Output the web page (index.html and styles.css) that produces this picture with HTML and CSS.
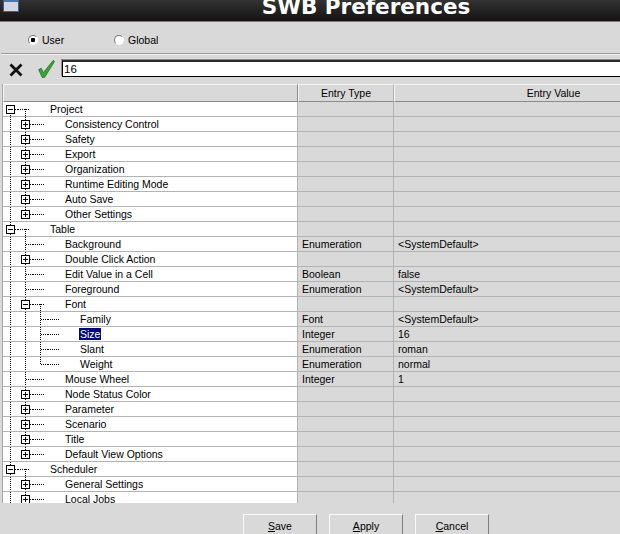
FILE: index.html
```html
<!DOCTYPE html>
<html>
<head>
    <meta charset="UTF-8">
    <title>SWB Preferences</title>
    <link rel="stylesheet" href="styles.css">
</head>
<body>
<div class="win">

    <div class="titlebar">
        <svg class="winicon" width="16" height="12" viewBox="0 0 16 12">
            <rect x="0.5" y="-1.5" width="15" height="13" fill="#d3d6dc" stroke="#3d5f96"/>
            <rect x="1" y="-1" width="14" height="3" fill="#4d74b4"/>
        </svg>
        <span class="title">SWB Preferences</span>
    </div>

    <div class="scope">
        <label class="opt"><span class="radio on"></span>User</label>
        <label class="opt"><span class="radio"></span>Global</label>
    </div>
    <div class="sep"></div>

    <div class="editbar">
        <svg class="btn-x" width="14" height="14" viewBox="0 0 14 14">
            <path d="M1.5 1.5 L12.5 12.5 M12.5 1.5 L1.5 12.5" stroke="#111" stroke-width="2.8"/>
        </svg>
        <svg class="btn-ok" width="17" height="18" viewBox="0 0 17 18">
            <polygon points="0.6,9.6 3.2,8.2 5.4,12.6 15.2,0.4 16.6,1.4 6.6,17.4 4.2,17.4" fill="#38a838" stroke="#1c661c" stroke-width="0.7"/>
        </svg>
        <div class="field">16</div>
    </div>

    <div class="table">
        <div class="hdr">
            <div class="h col-tree"></div>
            <div class="h col-type">Entry Type</div>
            <div class="h col-val">Entry Value</div>
        </div>
        <div class="rows">

            <div class="row"><div class="tree"><span class="n first"><i class="box"></i></span><span class="c open"></span><span class="lbl">Project</span></div><div class="col-type"></div><div class="col-val"></div></div>
            <div class="row"><div class="tree"><span class="g v"></span><span class="n"><i class="box plus"></i></span><span class="c"></span><span class="lbl">Consistency Control</span></div><div class="col-type"></div><div class="col-val"></div></div>
            <div class="row"><div class="tree"><span class="g v"></span><span class="n"><i class="box plus"></i></span><span class="c"></span><span class="lbl">Safety</span></div><div class="col-type"></div><div class="col-val"></div></div>
            <div class="row"><div class="tree"><span class="g v"></span><span class="n"><i class="box plus"></i></span><span class="c"></span><span class="lbl">Export</span></div><div class="col-type"></div><div class="col-val"></div></div>
            <div class="row"><div class="tree"><span class="g v"></span><span class="n"><i class="box plus"></i></span><span class="c"></span><span class="lbl">Organization</span></div><div class="col-type"></div><div class="col-val"></div></div>
            <div class="row"><div class="tree"><span class="g v"></span><span class="n"><i class="box plus"></i></span><span class="c"></span><span class="lbl">Runtime Editing Mode</span></div><div class="col-type"></div><div class="col-val"></div></div>
            <div class="row"><div class="tree"><span class="g v"></span><span class="n"><i class="box plus"></i></span><span class="c"></span><span class="lbl">Auto Save</span></div><div class="col-type"></div><div class="col-val"></div></div>
            <div class="row"><div class="tree"><span class="g v"></span><span class="n last"><i class="box plus"></i></span><span class="c"></span><span class="lbl">Other Settings</span></div><div class="col-type"></div><div class="col-val"></div></div>

            <div class="row"><div class="tree"><span class="n"><i class="box"></i></span><span class="c open"></span><span class="lbl">Table</span></div><div class="col-type"></div><div class="col-val"></div></div>
            <div class="row"><div class="tree"><span class="g v"></span><span class="n"></span><span class="c"></span><span class="lbl">Background</span></div><div class="col-type">Enumeration</div><div class="col-val">&lt;SystemDefault&gt;</div></div>
            <div class="row"><div class="tree"><span class="g v"></span><span class="n"><i class="box plus"></i></span><span class="c"></span><span class="lbl">Double Click Action</span></div><div class="col-type"></div><div class="col-val"></div></div>
            <div class="row"><div class="tree"><span class="g v"></span><span class="n"></span><span class="c"></span><span class="lbl">Edit Value in a Cell</span></div><div class="col-type">Boolean</div><div class="col-val">false</div></div>
            <div class="row"><div class="tree"><span class="g v"></span><span class="n"></span><span class="c"></span><span class="lbl">Foreground</span></div><div class="col-type">Enumeration</div><div class="col-val">&lt;SystemDefault&gt;</div></div>
            <div class="row"><div class="tree"><span class="g v"></span><span class="n"><i class="box"></i></span><span class="c open"></span><span class="lbl">Font</span></div><div class="col-type"></div><div class="col-val"></div></div>
            <div class="row"><div class="tree"><span class="g v"></span><span class="g v"></span><span class="n"></span><span class="c"></span><span class="lbl">Family</span></div><div class="col-type">Font</div><div class="col-val">&lt;SystemDefault&gt;</div></div>
            <div class="row"><div class="tree"><span class="g v"></span><span class="g v"></span><span class="n"></span><span class="c"></span><span class="lbl sel">Size</span></div><div class="col-type">Integer</div><div class="col-val">16</div></div>
            <div class="row"><div class="tree"><span class="g v"></span><span class="g v"></span><span class="n"></span><span class="c"></span><span class="lbl">Slant</span></div><div class="col-type">Enumeration</div><div class="col-val">roman</div></div>
            <div class="row"><div class="tree"><span class="g v"></span><span class="g v"></span><span class="n last"></span><span class="c"></span><span class="lbl">Weight</span></div><div class="col-type">Enumeration</div><div class="col-val">normal</div></div>
            <div class="row"><div class="tree"><span class="g v"></span><span class="n"></span><span class="c"></span><span class="lbl">Mouse Wheel</span></div><div class="col-type">Integer</div><div class="col-val">1</div></div>
            <div class="row"><div class="tree"><span class="g v"></span><span class="n"><i class="box plus"></i></span><span class="c"></span><span class="lbl">Node Status Color</span></div><div class="col-type"></div><div class="col-val"></div></div>
            <div class="row"><div class="tree"><span class="g v"></span><span class="n"><i class="box plus"></i></span><span class="c"></span><span class="lbl">Parameter</span></div><div class="col-type"></div><div class="col-val"></div></div>
            <div class="row"><div class="tree"><span class="g v"></span><span class="n"><i class="box plus"></i></span><span class="c"></span><span class="lbl">Scenario</span></div><div class="col-type"></div><div class="col-val"></div></div>
            <div class="row"><div class="tree"><span class="g v"></span><span class="n"><i class="box plus"></i></span><span class="c"></span><span class="lbl">Title</span></div><div class="col-type"></div><div class="col-val"></div></div>
            <div class="row"><div class="tree"><span class="g v"></span><span class="n last"><i class="box plus"></i></span><span class="c"></span><span class="lbl">Default View Options</span></div><div class="col-type"></div><div class="col-val"></div></div>

            <div class="row"><div class="tree"><span class="n"><i class="box"></i></span><span class="c open"></span><span class="lbl">Scheduler</span></div><div class="col-type"></div><div class="col-val"></div></div>
            <div class="row"><div class="tree"><span class="g v"></span><span class="n"><i class="box plus"></i></span><span class="c"></span><span class="lbl">General Settings</span></div><div class="col-type"></div><div class="col-val"></div></div>
            <div class="row"><div class="tree"><span class="g v"></span><span class="n"><i class="box plus"></i></span><span class="c"></span><span class="lbl">Local Jobs</span></div><div class="col-type"></div><div class="col-val"></div></div>

        </div>
    </div>

    <div class="buttons">
        <button class="btn"><u>S</u>ave</button>
        <button class="btn"><u>A</u>pply</button>
        <button class="btn"><u>C</u>ancel</button>
    </div>

</div>
</body>
</html>
```

FILE: styles.css
```css
*, *::after, *::before {
    box-sizing: border-box;
}

:root {
    --dh: repeating-linear-gradient(to right, #000 0 1px, transparent 1px 2px);
    --dv: repeating-linear-gradient(to bottom, #000 0 1px, transparent 1px 2px);
    --grid: #b3b3b3;
}

html, body {
    margin: 0;
    padding: 0;
    height: 100%;
    overflow: hidden;
    background: #d9d9d9;
    font-family: "Liberation Sans", Arial, sans-serif;
    font-size: 10.5px;
    color: #000;
}

.win {
    width: 732px;
}

/* window title */

.titlebar {
    height: 22px;
    display: flex;
    align-items: flex-start;
    background: linear-gradient(#333, #121212);
    border-bottom: 1px solid #5f80aa;
    overflow: hidden;
}

.winicon {
    margin-left: 3px;
    flex: none;
}

.title {
    flex: 1;
    margin-right: 19px;
    text-align: center;
    font-family: "DejaVu Sans", sans-serif;
    font-weight: bold;
    font-size: 21.5px;
    line-height: 14px;
    color: #fff;
}

/* scope radios */

.scope {
    display: flex;
    height: 31px;
    padding: 11px 0 0 28px;
}

.opt {
    width: 86px;
    display: flex;
    align-items: center;
    gap: 4px;
    height: 14px;
}

.radio {
    width: 10px;
    height: 10px;
    border-radius: 50%;
    border: 1px solid;
    border-color: #7a7a7a #fff #fff #7a7a7a;
    background: #fff;
}

.radio.on {
    background: radial-gradient(circle, #000 0 2px, #fff 2.5px);
}

.sep {
    margin-left: 1px;
    border-top: 1px solid #9d9d9d;
    border-bottom: 1px solid #f2f2f2;
}

/* edit bar */

.editbar {
    display: flex;
    align-items: flex-start;
    height: 29px;
    padding: 5px 0 0 9px;
}

.btn-x {
    margin-top: 3px;
    flex: none;
}

.btn-ok {
    margin-left: 15px;
    flex: none;
}

.field {
    flex: 1;
    margin-left: 7px;
    height: 17px;
    background: #fff;
    border-top: 2px solid #2a2a2a;
    border-left: 1px solid #000;
    border-bottom: 1px solid #000;
    padding-left: 1px;
    font-size: 11.5px;
    line-height: 14px;
    box-shadow: -1px -1px 0 #8c8c8c;
}

/* table */

.table {
    margin: 0 19px 0 2px;
    border-left: 1px solid #a6a6a6;
}

.hdr {
    display: flex;
    height: 18px;
}

.h {
    border: 1px solid;
    border-color: #f4f4f4 #8a8a8a #8a8a8a #f4f4f4;
    line-height: 16px;
    text-align: center;
    background: #d9d9d9;
}

.col-tree {
    width: 295px;
    flex: none;
}

.col-type {
    width: 96px;
    flex: none;
    padding-left: 4px;
    border-right: 1px solid var(--grid);
}

.col-val {
    flex: 1;
    padding-left: 4px;
}

.hdr .col-type,
.hdr .col-val {
    padding-left: 0;
}

.rows {
    height: 401px;
    overflow: hidden;
}

.row {
    display: flex;
    height: 15px;
    line-height: 14px;
    border-bottom: 1px solid var(--grid);
    white-space: nowrap;
}

.tree {
    width: 295px;
    flex: none;
    display: flex;
    align-items: center;
    background: #fff;
    border-right: 1px solid var(--grid);
}

/* tree guides */

.g {
    width: 15px;
    height: 14px;
    flex: none;
}

.g.v {
    background: var(--dv) 7px 0 / 1px 14px no-repeat;
}

.n {
    --vy: 0px;
    --vh: 14px;
    width: 15px;
    height: 14px;
    flex: none;
    display: flex;
    align-items: center;
    background:
        var(--dh) 8px 7px / 7px 1px no-repeat,
        var(--dv) 7px var(--vy) / 1px var(--vh) no-repeat;
}

.n.first {
    --vy: 7px;
    --vh: 7px;
}

.n.last {
    --vh: 8px;
}

.box {
    width: 9px;
    height: 9px;
    margin-left: 3px;
    border: 1px solid #000;
    background: linear-gradient(#000, #000) center / 5px 1px no-repeat, #fff;
}

.box.plus {
    background:
        linear-gradient(#000, #000) center / 5px 1px no-repeat,
        linear-gradient(#000, #000) center / 1px 5px no-repeat,
        #fff;
}

.c {
    width: 12px;
    height: 14px;
    flex: none;
    background: var(--dh) 0 7px / 12px 1px no-repeat;
}

.c.open {
    background:
        var(--dh) 0 7px / 12px 1px no-repeat,
        var(--dv) 7px 7px / 1px 7px no-repeat;
}

.lbl {
    margin-left: 19px;
    padding: 0 1px;
    line-height: 12px;
}

.lbl.sel {
    background: #00067f;
    color: #fff;
}

/* buttons */

.buttons {
    display: flex;
    justify-content: center;
    gap: 12px;
    margin-top: 11px;
}

.btn {
    width: 74px;
    height: 24px;
    padding: 0;
    background: #d9d9d9;
    border: 1px solid;
    border-color: #fafafa #7e7e7e #7e7e7e #fafafa;
    font-family: "Liberation Sans", Arial, sans-serif;
    font-size: 10.5px;
    color: #000;
}
```
